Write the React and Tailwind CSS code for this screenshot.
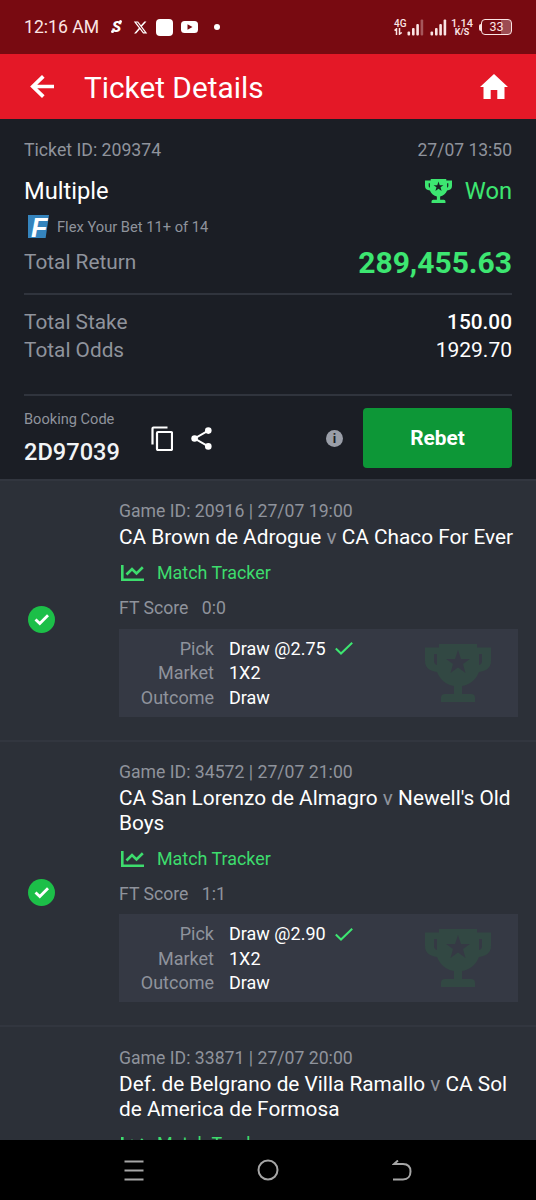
import React from "react";
import { FaXTwitter } from "react-icons/fa6";

const games = [
  {
    id: "20916",
    date: "27/07 19:00",
    home: "CA Brown de Adrogue",
    away: "CA Chaco For Ever",
    score: "0:0",
    odds: "2.75",
  },
  {
    id: "34572",
    date: "27/07 21:00",
    home: "CA San Lorenzo de Almagro",
    away: "Newell's Old Boys",
    score: "1:1",
    odds: "2.90",
  },
  {
    id: "33871",
    date: "27/07 20:00",
    home: "Def. de Belgrano de Villa Ramallo",
    away: "CA Sol de America de Formosa",
  },
];

const Trophy = ({ className }) => (
  <svg viewBox="0 0 66 58" preserveAspectRatio="none" className={className} fill="currentColor">
    <path
      fillRule="evenodd"
      d="M14 0H52V3.500H66V17C66 24 61 27 54 28C51 36 44 41 37 42V50H46Q50 50 50 54V58H16V54Q16 50 20 50H29V42C22 41 15 36 12 28C5 27 0 24 0 17V3.500H14ZM9 10V17Q9 20 12 21V10ZM54 10V21Q57 20 57 17V10ZM33 6L30 15H21L28 20L25.500 29L33 23.500L40.500 29L38 20L45 15H36Z"
    />
  </svg>
);

const Signal = ({ weak }) => (
  <svg viewBox="0 0 17 17" className="h-[17px] w-[17px]" fill="#fbe4e4">
    <rect x="0.500" y="12.500" width="2.600" height="4" rx="1" />
    <rect x="5" y="9" width="2.600" height="7.500" rx="1" />
    <rect x="9.300" y="5" width="2.600" height="11.500" rx="1" />
    <rect x="13.600" y="0.500" width="2.600" height="16" rx="1" opacity={weak ? 0.35 : 1} />
  </svg>
);

const StatusBar = () => (
  <div className="flex h-[54px] shrink-0 items-center bg-[#780a11] pl-6 pr-6 text-[#fbe4e4]">
    <span className="w-[87px] whitespace-nowrap text-[17.600px] leading-[22px]">12:16 AM</span>
    <span className="relative w-[22px] pl-px text-[15px] font-black italic leading-[22px] text-white">
      S
      <span className="absolute bottom-[5px] left-0 h-[3px] w-[3px] rounded-full bg-white" />
      <span className="absolute right-[11px] top-[4px] h-[3px] w-[3px] rounded-full bg-white" />
    </span>
    <FaXTwitter className="mr-2 h-[15px] w-[15px] text-white" />
    <span className="mr-2 h-[17px] w-[17px] rounded-[4px] bg-white" />
    <svg viewBox="0 0 17 12" className="h-[12px] w-[17px]">
      <rect width="17" height="12" rx="3.500" fill="#fff" />
      <path d="M6.500 3.300L11.500 6L6.500 8.700Z" fill="#780a11" />
    </svg>
    <span className="ml-4 h-[6px] w-[6px] rounded-full bg-white" />

    <div className="ml-auto flex items-center">
      <div className="flex w-[13px] flex-col">
        <span className="text-[10px] font-medium leading-[9px]">4G</span>
        <svg viewBox="0 0 9 7" className="h-[7px] w-[9px]" stroke="#fbe4e4" strokeWidth="1.500" fill="none">
          <path d="M0.500 2.500L2.500 0.800V7M5.500 0V6.200L7.800 4.500" />
        </svg>
      </div>
      <Signal weak />
      <div className="w-[6px]" />
      <Signal />
      <div className="ml-[4px] flex w-[22px] flex-col items-center">
        <span className="text-[11px] font-medium leading-[9px]">1.14</span>
        <span className="text-[9px] font-bold leading-[8px]">K/S</span>
      </div>
      <div className="ml-[6px] flex items-center">
        <span className="h-[7px] w-[2px] rounded-l bg-[#fbe4e4]" />
        <span className="flex h-[16px] w-[31px] items-center justify-center rounded-[4px] border border-[#fbe4e4] bg-[linear-gradient(90deg,#780a11_66%,#9c4c52_66%)] text-[12.500px] leading-none">
          33
        </span>
      </div>
    </div>
  </div>
);

const Header = () => (
  <div className="flex h-[65px] shrink-0 items-center bg-[#e41827] pl-[30px] pr-[28px] text-white">
    <svg viewBox="0 0 24 24" className="h-[24px] w-[24px]" fill="none" stroke="currentColor" strokeWidth="3.700">
      <path d="M24 11.500H3M13.300 1.300L2.800 11.500L13.300 21.700" />
    </svg>
    <h1 className="ml-[30px] pt-[2px] text-[29.800px] leading-[34px]">Ticket Details</h1>
    <svg viewBox="0 0 28 25" className="ml-auto h-[25px] w-[28px]" fill="currentColor">
      <path d="M14 0L28 13H24.500V25H17.300V16H10.700V25H3.500V13H0Z" />
    </svg>
  </div>
);

const Summary = () => (
  <div className="h-[360px] shrink-0 bg-[#1b1e25] px-6 pt-[20px] text-[#8f939c]">
    <div className="flex h-[22px] items-center justify-between text-[17.700px]">
      <span className="pt-px">Ticket ID: 209374</span>
      <span className="pt-px text-[17.500px]">27/07 13:50</span>
    </div>
    <div className="mt-[14px] flex h-[32px] items-center justify-between text-[23.700px]">
      <span className="pt-px text-white">Multiple</span>
      <span className="flex items-center text-[#3de671]">
        <Trophy className="mr-[13px] h-[24px] w-[27px]" />
        <span className="pt-px">Won</span>
      </span>
    </div>
    <div className="mt-[8px] flex h-[23px] items-center pl-[4px] text-[14.700px]">
      <span className="relative mr-[8px] h-[23px] w-[21px] bg-[#3584bd] [clip-path:polygon(0_0,100%_0,84%_100%,0_100%)]">
        <span className="absolute left-[3px] top-[2px] font-[Liberation_Sans] text-[27px] font-bold italic leading-[23px] text-white">
          F
        </span>
      </span>
      <span className="pt-[2px]">Flex Your Bet 11+ of 14</span>
    </div>
    <div className="mt-[7px] flex h-[34px] items-center justify-between text-[20.800px]">
      <span className="pt-[2px]">Total Return</span>
      <span className="text-[30px] font-bold text-[#3de671]">289,455.63</span>
    </div>
    <div className="mt-[14px] h-[2px] bg-[#30343d]" />
    <div className="mt-[14px] flex h-[28px] items-center justify-between text-[20.800px]">
      <span>Total Stake</span>
      <span className="font-medium text-white">150.00</span>
    </div>
    <div className="flex h-[28px] items-center justify-between text-[20.800px]">
      <span>Total Odds</span>
      <span className="text-[21px] text-white">1929.70</span>
    </div>
    <div className="mt-[29px] h-[2px] bg-[#30343d]" />
    <div className="mt-[12px] flex h-[60px] items-center">
      <div className="w-[127px]">
        <p className="text-[14.600px] leading-[20px]">Booking Code</p>
        <p className="mb-[2px] mt-[9px] text-[23.600px] font-medium leading-[28px] text-[#f2f4f6]">2D97039</p>
      </div>
      <svg viewBox="0 0 22 25" className="h-[25px] w-[22px]" fill="none" stroke="#fff" strokeWidth="2.200">
        <path d="M1.500 18.500V2.500Q1.500 1.500 2.500 1.500H16.500" />
        <rect x="6" y="6" width="15" height="18" rx="1" />
      </svg>
      <svg viewBox="0 0 21 23" className="ml-[18px] h-[23px] w-[21px]" fill="#fff">
        <path d="M17.300 3.600L3.600 11.500L17.300 19.400" fill="none" stroke="#fff" strokeWidth="2" />
        <circle cx="17.300" cy="3.600" r="3.300" />
        <circle cx="3.600" cy="11.500" r="3.300" />
        <circle cx="17.300" cy="19.400" r="3.300" />
      </svg>
      <span className="ml-auto mr-[20px] flex h-[17px] w-[17px] items-center justify-center rounded-full bg-[#9a9ea8] text-[13px] font-bold leading-none text-[#1b1e25]">
        i
      </span>
      <button className="h-[60px] w-[149px] rounded-[4px] bg-[#0d9737] pt-[2px] text-[20.800px] font-bold text-white">
        Rebet
      </button>
    </div>
  </div>
);

const Game = ({ game }) => (
  <div className="flex shrink-0 border-t-2 border-[#32363f] pb-[23px] pl-[28px] pr-[18px] pt-[19.400px]">
    <div className="flex w-[91px] shrink-0 items-center pt-[22px]">
      {game.score && (
        <svg viewBox="0 0 27 27" className="h-[27px] w-[27px]">
          <circle cx="13.500" cy="13.500" r="13.500" fill="#1cbf48" />
          <path d="M7.500 13.500L11.800 17.600L20 9.300" fill="none" stroke="#fff" strokeWidth="2.800" />
        </svg>
      )}
    </div>
    <div className="min-w-0 flex-1 text-[17.650px] text-[#8f939c]">
      <p className="leading-[22px]">
        Game ID: {game.id} | {game.date}
      </p>
      <p className="mt-[3px] text-[20.800px] leading-[25px] text-white">
        {game.home} <span className="text-[#8f939c]">v</span> {game.away}
      </p>
      <div className="mt-[11px] flex h-[24px] items-center text-[17.900px] text-[#3ddc6d]">
        <svg viewBox="0 0 23 16" className="ml-[2px] mr-[13px] h-[16px] w-[23px]" fill="none" stroke="currentColor" strokeWidth="2.600">
          <path d="M1.300 0V14.700H23" />
          <path d="M5.500 9.500L11 4L15.500 8.500L21.800 2.300" />
        </svg>
        Match Tracker
      </div>
      {game.score && (
        <>
          <p className="mt-[11px] leading-[24px]">
            FT Score <span className="ml-[9px]">{game.score}</span>
          </p>
          <div className="mt-[8.200px] flex h-[88px] items-center bg-[#353944] text-[18px] leading-[24.600px]">
            <div className="w-[95px] pt-[2px] text-right">
              <p>Pick</p>
              <p>Market</p>
              <p>Outcome</p>
            </div>
            <div className="ml-[15px] pt-[2px] text-white">
              <p className="flex items-center">
                Draw @{game.odds}
                <svg viewBox="0 0 18 13" className="ml-[9px] h-[13px] w-[18px]" fill="none" stroke="#3de671" strokeWidth="2">
                  <path d="M0.800 6.500L6 11.500L17.200 0.800" />
                </svg>
              </p>
              <p>1X2</p>
              <p>Draw</p>
            </div>
            <Trophy className="ml-auto mr-[27px] h-[58px] w-[66px] text-[#324843]" />
          </div>
        </>
      )}
    </div>
  </div>
);

const NavBar = () => (
  <div className="flex h-[60px] shrink-0 items-center justify-center gap-[113px] bg-black text-[#a6a6a6]">
    <svg viewBox="0 0 20 21" className="h-[21px] w-[20px]" stroke="currentColor" strokeWidth="2">
      <path d="M0.500 1.500H19.500M0.500 10.500H19.500M0.500 19.500H19.500" />
    </svg>
    <svg viewBox="0 0 22 22" className="h-[22px] w-[22px]" fill="none" stroke="currentColor" strokeWidth="2">
      <circle cx="11" cy="11" r="9.500" />
    </svg>
    <svg viewBox="0 0 20 21" className="h-[21px] w-[20px]" fill="none" stroke="currentColor" strokeWidth="2">
      <path d="M6 0.500L2 4H11C16 4 18.500 7 18.500 11.500C18.500 16 16 19.500 11 19.500H1" />
    </svg>
  </div>
);

const App = () => {
  return (
    <div className="flex h-[1200px] w-[536px] flex-col overflow-hidden bg-[#2c3038] font-[Roboto,sans-serif]">
      <StatusBar />
      <Header />
      <Summary />
      {/* Games */}
      <div className="flex min-h-0 flex-1 flex-col overflow-hidden">
        {games.map((game) => (
          <Game key={game.id} game={game} />
        ))}
      </div>
      <NavBar />
    </div>
  );
};

export default App;
